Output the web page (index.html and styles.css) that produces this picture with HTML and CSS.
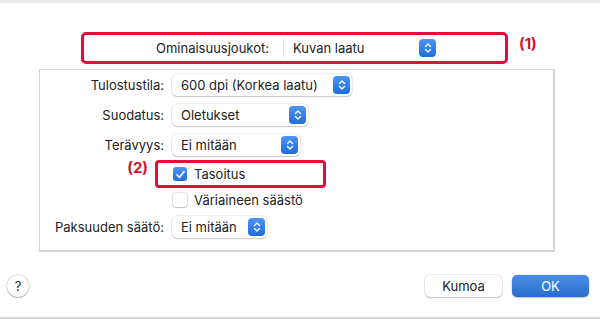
FILE: index.html
```html
<!DOCTYPE html>
<html lang="fi">
<head>
    <meta charset="UTF-8">
    <title>Tulostusasetukset</title>
    <link rel="stylesheet" href="styles.css">
</head>
<body>
    <div class="sheet">
        <div class="preset-row">
            <div class="preset-box">
                <span class="preset-label">Ominaisuusjoukot:</span>
                <div class="popup popup-flat preset-popup">
                    <span class="popup-text">Kuvan laatu</span>
                    <span class="stepper"><svg width="10" height="12" viewBox="0 0 10 12"><path d="M2.5 4.5 L5 2 L7.5 4.5 M2.5 7.5 L5 10 L7.5 7.5" fill="none" stroke="#fff" stroke-width="1.4" stroke-linecap="round" stroke-linejoin="round"/></svg></span>
                </div>
            </div>
            <span class="marker marker-one">(1)</span>
        </div>

        <div class="group">
            <div class="row row-a">
                <span class="label">Tulostustila:</span>
                <div class="popup w-180">
                    <span class="popup-text">600 dpi (Korkea laatu)</span>
                    <span class="stepper"><svg width="10" height="12" viewBox="0 0 10 12"><path d="M2.5 4.5 L5 2 L7.5 4.5 M2.5 7.5 L5 10 L7.5 7.5" fill="none" stroke="#fff" stroke-width="1.4" stroke-linecap="round" stroke-linejoin="round"/></svg></span>
                </div>
            </div>
            <div class="row row-b">
                <span class="label">Suodatus:</span>
                <div class="popup w-136">
                    <span class="popup-text">Oletukset</span>
                    <span class="stepper"><svg width="10" height="12" viewBox="0 0 10 12"><path d="M2.5 4.5 L5 2 L7.5 4.5 M2.5 7.5 L5 10 L7.5 7.5" fill="none" stroke="#fff" stroke-width="1.4" stroke-linecap="round" stroke-linejoin="round"/></svg></span>
                </div>
            </div>
            <div class="row row-c">
                <span class="label">Terävyys:</span>
                <div class="popup w-128">
                    <span class="popup-text">Ei mitään</span>
                    <span class="stepper"><svg width="10" height="12" viewBox="0 0 10 12"><path d="M2.5 4.5 L5 2 L7.5 4.5 M2.5 7.5 L5 10 L7.5 7.5" fill="none" stroke="#fff" stroke-width="1.4" stroke-linecap="round" stroke-linejoin="round"/></svg></span>
                </div>
            </div>
            <div class="row row-d">
                <span class="label"><span class="marker">(2)</span></span>
                <div class="check-box-hl">
                    <span class="check checked"><svg width="11" height="11" viewBox="0 0 11 11"><path d="M2 5.8 L4.5 8.3 L9 2.6" fill="none" stroke="#fff" stroke-width="1.8" stroke-linecap="round" stroke-linejoin="round"/></svg></span>
                    <span class="check-text">Tasoitus</span>
                </div>
            </div>
            <div class="row row-e">
                <span class="label"></span>
                <div class="check-line">
                    <span class="check"></span>
                    <span class="check-text">Väriaineen säästö</span>
                </div>
            </div>
            <div class="row row-f">
                <span class="label">Paksuuden säätö:</span>
                <div class="popup w-95">
                    <span class="popup-text">Ei mitään</span>
                    <span class="stepper"><svg width="10" height="12" viewBox="0 0 10 12"><path d="M2.5 4.5 L5 2 L7.5 4.5 M2.5 7.5 L5 10 L7.5 7.5" fill="none" stroke="#fff" stroke-width="1.4" stroke-linecap="round" stroke-linejoin="round"/></svg></span>
                </div>
            </div>
        </div>

        <div class="footer">
            <button class="help">?</button>
            <div class="buttons">
                <button class="btn">Kumoa</button>
                <button class="btn btn-primary">OK</button>
            </div>
        </div>
    </div>
</body>
</html>
```

FILE: styles.css
```css
html, body {
    margin: 0;
    padding: 0;
}

body {
    font-family: Inter, "Liberation Sans", sans-serif;
    font-size: 13px;
    color: #222222;
    background-color: #ffffff;
}

.sheet {
    width: 600px;
    height: 319px;
    box-sizing: border-box;
    border-top: 3px solid #ececec;
    border-bottom: 2px solid #d6d6d6;
}

/* preset row */
.preset-row {
    display: flex;
    align-items: center;
    margin-top: 29px;
    height: 32px;
}

.preset-box {
    margin-left: 81px;
    width: 427px;
    height: 32px;
    box-sizing: border-box;
    border: 3px solid #e0103a;
    border-radius: 5px;
    display: flex;
    align-items: center;
}

.preset-label {
    margin-left: 72px;
    width: 123px;
}

.preset-popup {
    margin-left: 4px;
    width: 155px;
}

.marker {
    color: #d4102f;
    font-weight: bold;
    font-size: 15px;
}

.marker-one {
    margin-left: 11px;
    margin-top: -10px;
}

/* group box */
.group {
    margin: 5px 0 0 39px;
    width: 516px;
    height: 183px;
    box-sizing: border-box;
    border: 1px solid #d6d6d6;
    border-right-width: 2px;
    border-bottom-width: 2px;
}

.row {
    display: flex;
    align-items: center;
}

.row-a { height: 29px; }
.row-b { height: 31px; }
.row-c { height: 30px; }
.row-d { height: 28px; }
.row-e { height: 23px; }
.row-f { height: 31px; }

.label {
    width: 124px;
    text-align: right;
    margin-right: 8px;
    flex-shrink: 0;
}

.row-d .label {
    box-sizing: border-box;
    padding-right: 16px;
    margin-top: -14px;
}

/* popup buttons */
.popup {
    height: 22px;
    box-sizing: border-box;
    background: #ffffff;
    border-radius: 5px;
    box-shadow: 0 0 0 0.5px rgba(0, 0, 0, 0.12), 0 1px 1.5px rgba(0, 0, 0, 0.18);
    display: flex;
    align-items: center;
    justify-content: space-between;
    padding: 0 2px 0 9px;
}

.popup-flat {
    box-shadow: none;
    border-left: 1px solid #e4e4e4;
    border-radius: 4px;
    height: 20px;
}

.w-180 { width: 180px; }
.w-136 { width: 136px; }
.w-128 { width: 128px; }
.w-95 { width: 95px; }

.stepper {
    width: 17px;
    height: 18px;
    border-radius: 4px;
    background: linear-gradient(#4b95f5, #1f6cdc);
    display: flex;
    align-items: center;
    justify-content: center;
}

/* checkboxes */
.check-box-hl {
    display: flex;
    align-items: center;
    margin-left: -17px;
    width: 171px;
    height: 28px;
    box-sizing: border-box;
    border: 3px solid #e0103a;
    border-radius: 4px;
    padding-left: 15px;
}

.check-line {
    display: flex;
    align-items: center;
    margin-left: 1px;
}

.check {
    width: 14px;
    height: 14px;
    box-sizing: border-box;
    border-radius: 3px;
    background: #ffffff;
    box-shadow: 0 0 0 0.5px rgba(0, 0, 0, 0.25), 0 1px 1px rgba(0, 0, 0, 0.12);
    display: flex;
    align-items: center;
    justify-content: center;
    margin-right: 7px;
}

.check.checked {
    background: linear-gradient(#4b95f5, #1f6cdc);
    box-shadow: none;
}

/* footer */
.footer {
    display: flex;
    align-items: center;
    justify-content: space-between;
    margin-top: 23px;
    padding: 0 11px 0 7px;
}

.help {
    width: 22px;
    height: 22px;
    border-radius: 50%;
    border: none;
    background: #ffffff;
    box-shadow: 0 0 0 0.5px rgba(0, 0, 0, 0.2), 0 1px 1.5px rgba(0, 0, 0, 0.25);
    font-family: inherit;
    font-size: 13px;
    color: #222222;
    padding: 0;
}

.buttons {
    display: flex;
    gap: 10px;
}

.btn {
    width: 77px;
    height: 22px;
    border: none;
    border-radius: 5px;
    background: #ffffff;
    box-shadow: 0 0 0 0.5px rgba(0, 0, 0, 0.15), 0 1px 1.5px rgba(0, 0, 0, 0.2);
    font-family: inherit;
    font-size: 13px;
    color: #222222;
    padding: 0;
}

.btn-primary {
    background: linear-gradient(#4c8ee6, #2a6ccb);
    color: #ffffff;
    box-shadow: 0 0 0 0.5px rgba(0, 0, 0, 0.1), 0 1px 1.5px rgba(0, 0, 0, 0.2);
}
```
